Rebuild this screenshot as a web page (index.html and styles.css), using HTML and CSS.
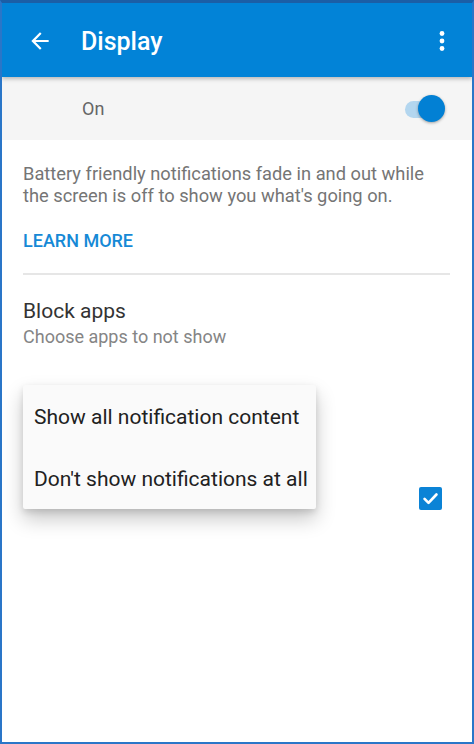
FILE: index.html
```html
<!DOCTYPE html>
<html>
<head>
<meta charset="utf-8">
<link rel="stylesheet" href="styles.css">
</head>
<body>
<div class="frame">
  <header class="appbar">
    <svg class="back" width="24" height="24" viewBox="0 0 24 24"><path d="M20 11H7.83l5.59-5.59L12 4l-8 8 8 8 1.41-1.41L7.83 13H20v-2z" fill="#fff"/></svg>
    <h1 class="title">Display</h1>
    <svg class="kebab" width="8" height="22" viewBox="0 0 8 22"><circle cx="4" cy="3.5" r="2.4" fill="#fff"/><circle cx="4" cy="11" r="2.4" fill="#fff"/><circle cx="4" cy="18.5" r="2.4" fill="#fff"/></svg>
  </header>
  <div class="status-row">
    <span class="status-label">On</span>
    <span class="switch"><span class="track"></span><span class="thumb"></span></span>
  </div>
  <div class="content">
    <p class="desc">Battery friendly notifications fade in and out while the screen is off to show you what's going on.</p>
    <div class="learn">LEARN MORE</div>
    <div class="divider"></div>
    <div class="pref">
      <div class="pref-title">Block apps</div>
      <div class="pref-sub">Choose apps to not show</div>
    </div>
    <div class="check-row">
      <span class="checkbox"><svg width="19" height="19" viewBox="0 0 24 24"><path d="M4.5 12.5l5 5L19.5 7" stroke="#fff" stroke-width="3.4" fill="none" stroke-linecap="round" stroke-linejoin="round"/></svg></span>
    </div>
    <div class="menu">
      <div class="menu-item">Show all notification content</div>
      <div class="menu-item">Don't show notifications at all</div>
    </div>
  </div>
</div>
</body>
</html>
```

FILE: styles.css
```css
html, body {
  margin: 0;
  padding: 0;
  background: #fff;
}
.frame {
  box-sizing: border-box;
  width: 474px;
  height: 744px;
  border-left: 2px solid #2a76c8;
  border-right: 2px solid #2a76c8;
  border-bottom: 2px solid #2a76c8;
  border-top: 3px solid #1b5ea6;
  font-family: Roboto, "Liberation Sans", sans-serif;
  display: flex;
  flex-direction: column;
  overflow: hidden;
}
.appbar {
  height: 74px;
  background: #0283d7;
  display: flex;
  align-items: center;
  padding: 2px 0 0 25px;
  box-sizing: border-box;
  box-shadow: 0 2px 4px rgba(0,0,0,0.25);
  position: relative;
  z-index: 2;
  flex: none;
}
.back {
  width: 26px;
  height: 26px;
  margin-right: 28px;
}
.title {
  margin: 0;
  font-size: 25px;
  font-weight: 500;
  color: #fff;
  flex: 1;
}
.kebab {
  margin-right: 26px;
}
.status-row {
  height: 63px;
  background: #f5f5f5;
  display: flex;
  align-items: center;
  justify-content: space-between;
  padding: 0 28px 0 80px;
  flex: none;
}
.status-label {
  font-size: 18px;
  color: #666;
}
.switch {
  position: relative;
  width: 40px;
  height: 28px;
  display: block;
}
.track {
  position: absolute;
  left: 1px;
  top: 6px;
  width: 36px;
  height: 17px;
  border-radius: 9px;
  background: #b3d6ef;
}
.thumb {
  position: absolute;
  right: -1px;
  top: 0;
  width: 27px;
  height: 27px;
  border-radius: 50%;
  background: #0280d4;
  box-shadow: 0 1px 3px rgba(0,0,0,0.35);
}
.content {
  position: relative;
  flex: 1;
  padding: 0 22px 0 21px;
}
.desc {
  margin: 23px 20px 0 0;
  font-size: 18.3px;
  line-height: 22px;
  color: #757575;
}
.learn {
  margin-top: 23px;
  font-size: 18px;
  font-weight: 500;
  color: #1689d6;
  line-height: 22px;
}
.divider {
  margin-top: 21px;
  height: 2px;
  background: #e6e6e6;
}
.pref {
  margin-top: 24px;
}
.pref-title {
  font-size: 21px;
  line-height: 24px;
  color: #333;
}
.pref-sub {
  margin-top: 3px;
  font-size: 18px;
  line-height: 22px;
  color: #858585;
}
.check-row {
  display: flex;
  justify-content: flex-end;
  margin-top: 139px;
  padding-right: 8px;
}
.checkbox {
  width: 23px;
  height: 23px;
  border-radius: 2px;
  background: #0b83d6;
  display: flex;
  align-items: center;
  justify-content: center;
}
.menu {
  position: absolute;
  left: 21px;
  top: 245px;
  width: 293px;
  background: #fafafa;
  border-radius: 2px;
  box-shadow: 0 10px 20px rgba(0,0,0,0.22), 0 3px 6px rgba(0,0,0,0.12);
  padding: 0;
}
.menu-item {
  height: 62px;
  display: flex;
  align-items: center;
  padding: 1px 0 0 11px;
  box-sizing: border-box;
  font-size: 21px;
  color: #212121;
}
```
